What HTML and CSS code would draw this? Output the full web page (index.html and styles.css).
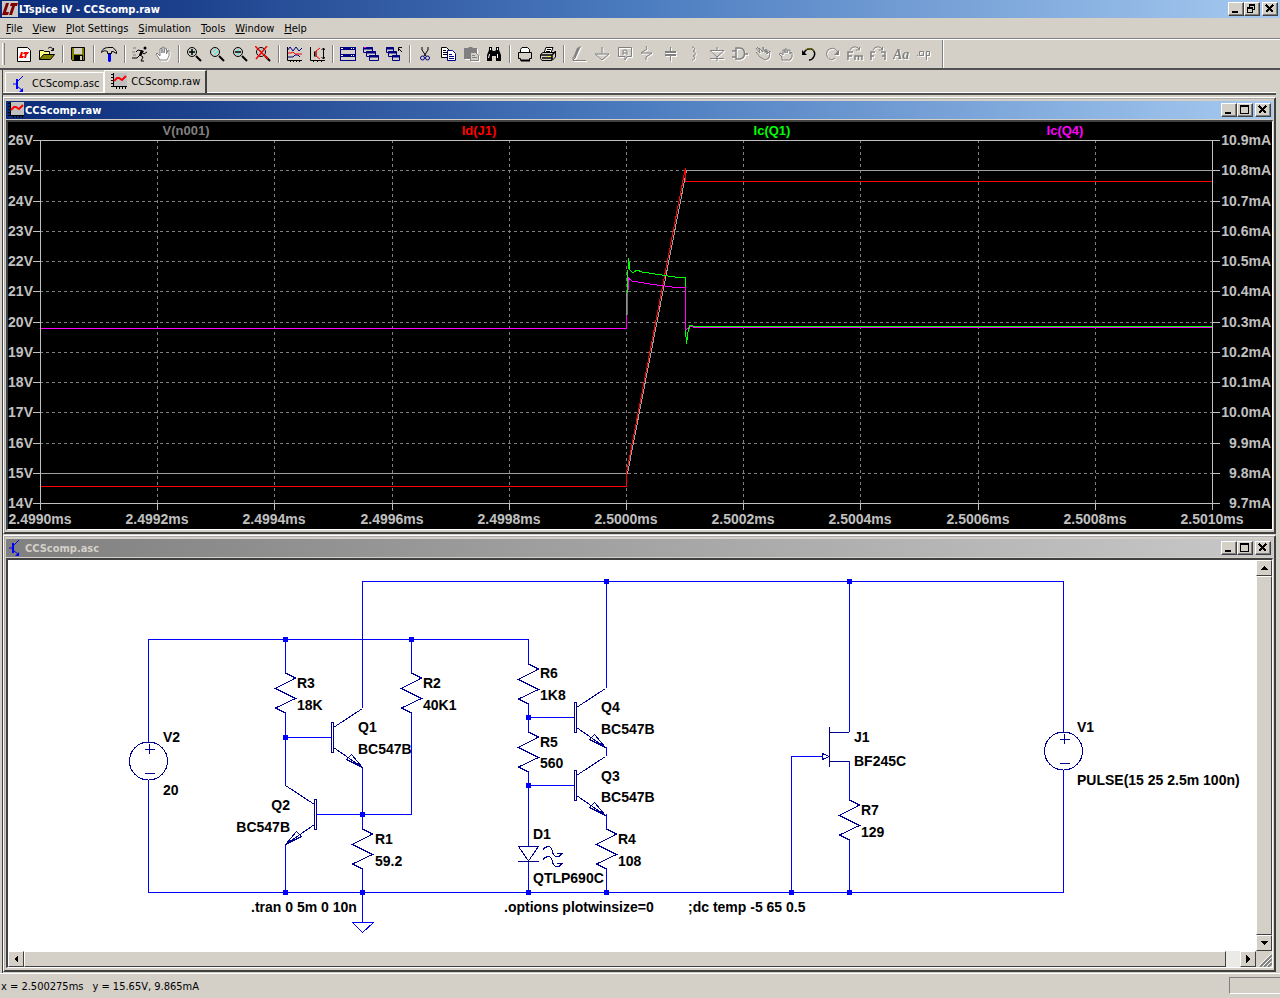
FILE: index.html
```html
<!DOCTYPE html>
<html lang="en">
<head>
  <meta charset="UTF-8">
  <meta name="viewport" content="width=device-width, initial-scale=1.0">
  <title>LTspice IV - CCScomp.raw</title>
  <link rel="stylesheet" href="styles.css">
</head>
<body>

  <!-- Shared symbols -->
  <svg class="defs" width="0" height="0" aria-hidden="true">
    <defs>
      <symbol id="icon-wave" viewBox="0 0 16 16">
        <rect x="2" width="14" height="13" fill="#c0c0c0"/>
        <path d="M2.5 0V14M0 13.5H16M0 1.5H2M0 4.5H2M0 7.5H2M0 10.5H2M5.5 14V16M8.5 14V16M11.5 14V16M14.5 14V16" stroke="#000"/>
        <path d="M3 8L6 5H8L11 7L15 3" stroke="#f00" stroke-width="2" fill="none"/>
      </symbol>
      <symbol id="icon-bjt" viewBox="0 0 16 16">
        <path d="M1 8H5M5 6L11 0M5 10L11 15" stroke="#00f" fill="none"/>
        <path d="M5 3V13" stroke="#00f" stroke-width="2"/>
        <path d="M11 12V16H7Z" fill="#00f"/>
      </symbol>
      <symbol id="icon-lens" viewBox="0 0 16 16">
        <circle cx="6" cy="6" r="4.5" fill="#d4d0c8" stroke="#000"/>
        <path d="M4 6L7 3M5 9L9 5" stroke="#0ff"/>
        <path d="M10 10L15 15" stroke="#000" stroke-width="2"/>
      </symbol>
      <symbol id="icon-min" viewBox="0 0 12 10"><path d="M2 8H8" stroke="#000" stroke-width="2"/></symbol>
      <symbol id="icon-max" viewBox="0 0 12 10"><path d="M1.5 1V8.5H9.5V1M1 1H10" stroke="#000" fill="none"/><path d="M1 1H10" stroke="#000" stroke-width="2"/></symbol>
      <symbol id="icon-restore" viewBox="0 0 12 10"><path d="M3.5 3V.5H8.5V5.5H7M3 1H9M1.5 3.5H6.5V8.5H1.5ZM1 4H7" stroke="#000" fill="none"/></symbol>
      <symbol id="icon-close" viewBox="0 0 12 10"><path d="M2 1L9 8M9 1L2 8" stroke="#000" stroke-width="1.5"/></symbol>
      <!-- circuit parts, origin at the first pin -->
      <g id="resistor"><path d="M0 0L10 5L-10 15.500L10 25.500L-10 35L0 40"/></g>
      <g id="npn">
        <path d="M0 -15H2V15H0ZM2 -10L31 -29M2 10L31 30M20 17L31 30L15 22Z"/>
      </g>
      <g id="source">
        <circle r="19"/>
        <path d="M-4 -12H6M1 -17V-7M-4 12H6"/>
      </g>
    </defs>
  </svg>

  <div class="app">
    <header class="title-bar">
      <svg class="icon" viewBox="0 0 16 16"><rect width="16" height="16" fill="#c8c8c8"/><path d="M4 2H7L4 11H7L6 14H0ZM9 2H16L15 5H13L10 14H7L10 5H8Z" fill="#800000"/></svg>
      <h1>LTspice IV - CCScomp.raw</h1>
      <div class="window-buttons">
        <button aria-label="Minimize"><svg><use href="#icon-min"/></svg></button>
        <button aria-label="Restore"><svg><use href="#icon-restore"/></svg></button>
        <button aria-label="Close"><svg><use href="#icon-close"/></svg></button>
      </div>
    </header>

    <nav class="menu-bar">
      <button><u>F</u>ile</button>
      <button><u>V</u>iew</button>
      <button><u>P</u>lot Settings</button>
      <button><u>S</u>imulation</button>
      <button><u>T</u>ools</button>
      <button><u>W</u>indow</button>
      <button><u>H</u>elp</button>
    </nav>

    <div class="toolbar">
      <span class="grip"></span>
      <button aria-label="New schematic"><svg viewBox="0 0 16 16"><path d="M1.500 1.500H11.500L14.500 4.500V15.500H1.500Z" fill="#fff" stroke="#000"/><path d="M5 6H7L6 10H8L7 12H3ZM8 6H13L12 8H11L10 12H8L9 8H7Z" fill="#f00"/></svg></button>
      <button aria-label="Open"><svg viewBox="0 0 16 16"><path d="M.5 13.500V4.500H4.500L5.500 5.500H10.500V8" fill="#ffff80" stroke="#000"/><path d="M.5 13.500L4.500 8.500H15.500L11.500 13.500Z" fill="#808000" stroke="#000"/><path d="M9 2.500C11 .5 13 1 14 4M14.500 2V4.500H12" fill="none" stroke="#000"/></svg></button>
      <span class="sep"></span>
      <button aria-label="Save"><svg viewBox="0 0 16 16"><path d="M1.500 1.500H14.500V14.500H2.500L1.500 13.500Z" fill="#808000" stroke="#000"/><rect x="4" y="2" width="8" height="6" fill="#d4d0c8"/><rect x="4" y="9" width="9" height="5" fill="#000"/><rect x="10" y="10" width="2" height="4" fill="#d4d0c8"/></svg></button>
      <span class="sep"></span>
      <button aria-label="Control panel"><svg viewBox="0 0 16 16"><path d="M.5 6.500C1 3 4 1.500 8 1.500H12L15.500 5.500V7.500L12 5.500H10.500V7.500H6.500V5.500C4 4 2 5 .5 6.500Z" fill="#d4d0c8" stroke="#000"/><path d="M7 8H10V15L9 16H8L7 15Z" fill="#00f"/></svg></button>
      <span class="sep"></span>
      <button aria-label="Run"><svg viewBox="0 0 16 16"><circle cx="13" cy="2" r="1.500"/><path d="M10 5L8 9L11 11L9 15H12M8 9L5 12H0M10 5L6 4L4 6M10 6L12 8L15 6" fill="none" stroke="#000"/><path d="M9 4L12 5L9 10L7 9Z"/><path d="M1 2H4M0 6H3M1 9H4" stroke="#808080"/></svg></button>
      <button class="off" disabled aria-label="Halt"><svg viewBox="0 0 16 16"><path d="M5 14L1 8L2 7L5 10V3L6 2L7 3V7V1.500L9 1V7L10 2L11.500 2.500V8L13 4L14 5V10L12 14Z" fill="#fff" stroke="#808080"/></svg></button>
      <span class="sep"></span>
      <button aria-label="Zoom area"><svg viewBox="0 0 16 16"><use href="#icon-lens"/><path d="M3 6H9M6 3V9" stroke="#000" stroke-width="1.500"/></svg></button>
      <button aria-label="Pan"><svg viewBox="0 0 16 16"><use href="#icon-lens"/></svg></button>
      <button aria-label="Zoom back"><svg viewBox="0 0 16 16"><use href="#icon-lens"/><path d="M3 6H9" stroke="#000" stroke-width="1.500"/></svg></button>
      <button aria-label="Zoom full extents"><svg viewBox="0 0 16 16"><use href="#icon-lens"/><path d="M0 0L13 13M12 0L1 13" stroke="#f00" stroke-width="1.500"/></svg></button>
      <span class="sep"></span>
      <button aria-label="Autorange"><svg viewBox="0 0 16 16"><path d="M1.500 1V14.500H16M4.500 14V16M7.500 14V16M10.500 14V16M13.500 14V16" fill="none" stroke="#000"/><path d="M1 5L4 1L7 5L10 1L13 5L16 2M2 11H7L9 9H12L14 11" fill="none" stroke="#000080"/><path d="M2 7H5L7 6L9 8H16" fill="none" stroke="#f00"/></svg></button>
      <button aria-label="Plot settings"><svg viewBox="0 0 16 16"><path d="M1.500 1V14.500H16M4.500 14V16M8.500 14V16M12.500 14V16M5 6H8M5 8H8M5 10H8M5.500 6V10M14.500 2V13M12.500 4L14.500 2L16 4M12.500 11L14.500 13L16 11" fill="none" stroke="#000"/><path d="M11 2L7 5V10L11 13" fill="none" stroke="#f00"/></svg></button>
      <span class="sep"></span>
      <button aria-label="Tile windows"><svg viewBox="0 0 16 16" shape-rendering="crispEdges"><path d="M0 1H16V15H0Z" fill="#000080"/><path d="M1 4H15V8H1ZM1 11H15V14H1Z" fill="#d4d0c8"/><path d="M1 2.500H3M11 2.500H12M13 2.500H14M1 9.500H3M11 9.500H12M13 9.500H14" stroke="#fff"/></svg></button>
      <button aria-label="Cascade windows"><svg viewBox="0 0 16 16"><g fill="#d4d0c8" stroke="#000080"><path d="M.5 1.500H9.500V6.500H.5Z"/><path d="M0 2.500H10" stroke-width="2"/><path d="M3.500 5.500H12.500V10.500H3.500Z"/><path d="M3 6.500H13" stroke-width="2"/><path d="M6.500 9.500H15.500V14.500H6.500Z"/><path d="M6 10.500H16" stroke-width="2"/></g><path d="M1 1.500H3" stroke="#f0f"/></svg></button>
      <button aria-label="Close all windows"><svg viewBox="0 0 16 16"><g fill="#d4d0c8" stroke="#000080"><path d="M.5 1.500H7.500V6.500H.5Z"/><path d="M0 2.500H8" stroke-width="2"/><path d="M2.500 5.500H10.500V10.500H2.500Z"/><path d="M2 6.500H11" stroke-width="2"/><path d="M6.500 9.500H13.500V14.500H6.500Z"/><path d="M6 10.500H14" stroke-width="2"/></g><path d="M16 6L12 2M12.500 5V1.500H16" fill="none" stroke="#000"/></svg></button>
      <span class="sep"></span>
      <button aria-label="Cut"><svg viewBox="0 0 16 16"><path d="M5 1V4L9 10M11 1V4L7 10" fill="none" stroke="#000"/><circle cx="5.500" cy="12" r="2" fill="none" stroke="#000080"/><circle cx="10.500" cy="12" r="2" fill="none" stroke="#000080"/></svg></button>
      <button aria-label="Copy"><svg viewBox="0 0 16 16"><path d="M1.500 1.500H6.500L9.500 4.500V11.500H1.500Z" fill="#fff" stroke="#000"/><path d="M3 4.500H6M3 6.500H7M3 8.500H7" stroke="#000"/><path d="M7.500 4.500H12.500L15.500 7.500V14.500H7.500Z" fill="#fff" stroke="#000080"/><path d="M9 8.500H12M9 10.500H14M9 12.500H14" stroke="#000080"/></svg></button>
      <button class="off" disabled aria-label="Paste"><svg viewBox="0 0 16 16"><path d="M1 2H5L6 1H9L10 2H14V13H1Z" fill="#808080"/><path d="M7.500 6.500H12.500L15.500 9.500V14.500H7.500Z" fill="#d4d0c8" stroke="#808080"/><path d="M9 9.500H12M9 11.500H14" stroke="#808080"/></svg></button>
      <button aria-label="Find"><svg viewBox="0 0 16 16"><path d="M3 1H6V4L7 5H9L10 4V1H13V4L15 9V15H10V10H6V15H1V9L3 4Z"/><path d="M4.500 2V4M11.500 2V4M3.500 8L2.500 12M11.500 8V12" stroke="#fff"/></svg></button>
      <span class="sep"></span>
      <button aria-label="Print setup"><svg viewBox="0 0 16 16"><path d="M3.500 7.500V3.500L5 1.500H10.500L12.500 3.500V7.500" fill="#fff" stroke="#000"/><path d="M1.500 6.500H14.500V12.500H12.500V14.500H3.500V12.500H1.500Z" fill="#d4d0c8" stroke="#000"/><path d="M4 14.500H13" stroke="#000" stroke-width="2"/></svg></button>
      <button aria-label="Print"><svg viewBox="0 0 16 16"><path d="M4 7L6 1.500H13L11 7" fill="#fff" stroke="#000"/><path d="M7 3.500H11M6 5.500H10" stroke="#000"/><path d="M.5 8.500L3 6.500H14L15.500 5V11L12 14.500H2L.5 12.500Z" fill="#d4d0c8" stroke="#000"/><path d="M1 9H12V14M12 9L15 6M2 12H12" fill="none" stroke="#000" stroke-width="1.500"/><path d="M8 10.500H11" stroke="#ff0"/></svg></button>
      <span class="sep"></span>
      <button class="off" disabled aria-label="Draw wire"><svg viewBox="0 0 16 16"><path d="M2 12L6 2L10 0L5 11Z" fill="#808080"/><path d="M2 14.500H15M2 11V14L5 11" fill="none" stroke="#808080"/></svg></button>
      <button class="off" disabled aria-label="Place ground"><svg viewBox="0 0 16 16"><path d="M8 1V8M1 8H15L8 14Z" fill="none" stroke="#808080"/></svg></button>
      <button class="off" disabled aria-label="Label net"><svg viewBox="0 0 16 16"><path d="M1.500 1.500H14.500V10.500H10L8 14V10.500H1.500ZM6 9V5L7 4H9L10 5V9M6 7H10" fill="none" stroke="#808080"/></svg></button>
      <button class="off" disabled aria-label="Resistor"><svg viewBox="0 0 16 16"><path d="M6 0L7 3L1 7H12L6 11V14" fill="none" stroke="#808080"/></svg></button>
      <button class="off" disabled aria-label="Capacitor"><svg viewBox="0 0 16 16"><path d="M2 6H13M2 9H13" stroke="#808080" stroke-width="2"/><path d="M7.500 1V6M7.500 10V15" stroke="#808080"/></svg></button>
      <button class="off" disabled aria-label="Inductor"><svg viewBox="0 0 16 16"><path d="M6 1C9 1 10 5 7 5C10 5 10 10 7 10C10 10 9 14 6 14" fill="none" stroke="#808080"/></svg></button>
      <button class="off" disabled aria-label="Diode"><svg viewBox="0 0 16 16"><path d="M8 1V4M1 4.500H15L8 11ZM1 12.500H15M8 11V15" fill="none" stroke="#808080"/></svg></button>
      <button class="off" disabled aria-label="Component"><svg viewBox="0 0 16 16"><path d="M0 5H4M0 11H4M4 2H8C14 3 14 12 8 13H4ZM12 8H16" fill="none" stroke="#808080" stroke-width="1.500"/></svg></button>
      <button class="off" disabled aria-label="Move"><svg viewBox="0 0 16 16"><path d="M1 2L5 7L4 2L8 6L8 1L10 6M1 6L5 11L10 14L14 12L15 5L12 8L11 3L10 7M2 1L4 3M13 4L12 8" fill="none" stroke="#808080"/></svg></button>
      <button class="off" disabled aria-label="Drag"><svg viewBox="0 0 16 16"><path d="M4 14V11L1 8L3 7L5 9V4H7V7V3H9V7L10 4H12V8L13 6L14 7V11L12 14Z" fill="none" stroke="#808080"/></svg></button>
      <button aria-label="Undo"><svg viewBox="0 0 16 16"><path d="M3 8C4 2 10 2 12 4C16 8 12 14 8 14" fill="none" stroke="#000" stroke-width="1.500"/><path d="M5 4C8 1 12 3 13 5" fill="none" stroke="#808000"/><path d="M1 4V9H6Z"/></svg></button>
      <button class="off" disabled aria-label="Redo"><svg viewBox="0 0 16 16"><path d="M14 7C13 2 7 1 4 4C1 8 3 13 8 14L11 12" fill="none" stroke="#808080"/><path d="M15 4V9H10Z" fill="#808080"/></svg></button>
      <button class="off" disabled aria-label="Rotate"><svg viewBox="0 0 16 16"><path d="M1 14V6H6M1 10H5M8 14V10H15V14M11.500 10V14" fill="none" stroke="#808080" stroke-width="1.500"/><path d="M3 4C5 0 10 0 12 3M12.500 1V4H9" fill="none" stroke="#808080"/></svg></button>
      <button class="off" disabled aria-label="Mirror"><svg viewBox="0 0 16 16"><path d="M1 14V6H5M1 10H4M15 14V6H11M15 10H12" fill="none" stroke="#808080" stroke-width="1.500"/><path d="M3 4C5 0 10 0 12 3M12.500 1V4H9" fill="none" stroke="#808080"/></svg></button>
      <button class="off" disabled aria-label="Text"><svg viewBox="0 0 16 16"><text class="icon-serif" x="0" y="13">Aa</text></svg></button>
      <button class="off" disabled aria-label="SPICE directive"><svg viewBox="0 0 16 16"><path d="M3.500 5.500H7.500V9.500H3.500ZM10.500 14V5.500H13.500V9.500H10.500M1 9.500H2" fill="none" stroke="#808080"/></svg></button>
      <span class="toolbar-end"></span>
    </div>

    <div class="tabs">
      <button class="tab"><svg class="icon"><use href="#icon-bjt"/></svg>CCScomp.asc</button>
      <button class="tab active"><svg class="icon"><use href="#icon-wave"/></svg>CCScomp.raw</button>
    </div>

    <main class="workspace">
      <section class="window">
        <div class="window-title">
          <svg class="icon"><use href="#icon-wave"/></svg>
          <h2>CCScomp.raw</h2>
          <div class="window-buttons">
            <button aria-label="Minimize"><svg><use href="#icon-min"/></svg></button>
            <button aria-label="Maximize"><svg><use href="#icon-max"/></svg></button>
            <button aria-label="Close"><svg><use href="#icon-close"/></svg></button>
          </div>
        </div>
        <div class="client">
          <svg class="plot" viewBox="8 122 1264 407">
            <g class="grid">
              <path d="M40 170.500H1212M40 201.500H1212M40 231.500H1212M40 261.500H1212M40 291.500H1212M40 322.500H1212M40 352.500H1212M40 382.500H1212M40 412.500H1212M40 443.500H1212M40 473.500H1212"/>
              <path d="M157.500 140V503M274.500 140V503M392.500 140V503M509.500 140V503M626.500 140V503M743.500 140V503M860.500 140V503M978.500 140V503M1095.500 140V503"/>
            </g>
            <g class="axis">
              <path d="M33 140.500H1220M33 503.500H1220M40.500 140V510M1212.500 140V510"/>
              <path d="M33 170.500H40M33 201.500H40M33 231.500H40M33 261.500H40M33 291.500H40M33 322.500H40M33 352.500H40M33 382.500H40M33 412.500H40M33 443.500H40M33 473.500H40"/>
              <path d="M1212 170.500H1220M1212 201.500H1220M1212 231.500H1220M1212 261.500H1220M1212 291.500H1220M1212 322.500H1220M1212 352.500H1220M1212 382.500H1220M1212 412.500H1220M1212 443.500H1220M1212 473.500H1220"/>
              <path d="M157.500 503V510M274.500 503V510M392.500 503V510M509.500 503V510M626.500 503V510M743.500 503V510M860.500 503V510M978.500 503V510M1095.500 503V510"/>
            </g>

            <path class="trace gray" d="M41 473.500H627.500L686.500 170.500H1212"/>
            <path class="trace red" d="M41 486.500H626.500V473L685 170V168L685.500 181.500H1212"/>
            <path class="trace magenta" d="M41 328.500H626.500L628.500 278L632 281L650 284L672 287H685.500V330L688 328L690 326L694 327.500H1212"/>
            <path class="trace green" d="M626.500 315V305L628.500 258L630 270L633 273L637 270L642 272L675 277H685.500V287M685.500 330L686.500 344L688 332L690 325L694 326.500H1212"/>

            <g class="legend">
              <text class="gray" x="186" y="135">V(n001)</text>
              <text class="red" x="479" y="135">Id(J1)</text>
              <text class="green" x="772" y="135">Ic(Q1)</text>
              <text class="magenta" x="1065" y="135">Ic(Q4)</text>
            </g>
            <g class="labels left">
              <text x="33" y="145">26V</text><text x="33" y="175">25V</text><text x="33" y="206">24V</text>
              <text x="33" y="236">23V</text><text x="33" y="266">22V</text><text x="33" y="296">21V</text>
              <text x="33" y="327">20V</text><text x="33" y="357">19V</text><text x="33" y="387">18V</text>
              <text x="33" y="417">17V</text><text x="33" y="448">16V</text><text x="33" y="478">15V</text>
              <text x="33" y="508">14V</text>
            </g>
            <g class="labels right">
              <text x="1271" y="145">10.9mA</text><text x="1271" y="175">10.8mA</text><text x="1271" y="206">10.7mA</text>
              <text x="1271" y="236">10.6mA</text><text x="1271" y="266">10.5mA</text><text x="1271" y="296">10.4mA</text>
              <text x="1271" y="327">10.3mA</text><text x="1271" y="357">10.2mA</text><text x="1271" y="387">10.1mA</text>
              <text x="1271" y="417">10.0mA</text><text x="1271" y="448">9.9mA</text><text x="1271" y="478">9.8mA</text>
              <text x="1271" y="508">9.7mA</text>
            </g>
            <g class="labels bottom">
              <text x="40" y="524">2.4990ms</text><text x="157" y="524">2.4992ms</text><text x="274" y="524">2.4994ms</text>
              <text x="392" y="524">2.4996ms</text><text x="509" y="524">2.4998ms</text><text x="626" y="524">2.5000ms</text>
              <text x="743" y="524">2.5002ms</text><text x="860" y="524">2.5004ms</text><text x="978" y="524">2.5006ms</text>
              <text x="1095" y="524">2.5008ms</text><text x="1212" y="524">2.5010ms</text>
            </g>
          </svg>
        </div>
      </section>

      <section class="window inactive">
        <div class="window-title">
          <svg class="icon"><use href="#icon-bjt"/></svg>
          <h2>CCScomp.asc</h2>
          <div class="window-buttons">
            <button aria-label="Minimize"><svg><use href="#icon-min"/></svg></button>
            <button aria-label="Maximize"><svg><use href="#icon-max"/></svg></button>
            <button aria-label="Close"><svg><use href="#icon-close"/></svg></button>
          </div>
        </div>
        <div class="client scrollable">
          <svg class="schematic" viewBox="8 560 1248 391">
            <g class="wires">
              <path d="M362.500 708V581.500H1063.500V732M1063.500 770V892.500H148.500V780M148.500 742V639.500H528.500V664"/>
              <path d="M285.500 639V673M285.500 713V785M285.500 737.500H331M285.500 844V892M411.500 639V673M411.500 713V814.500H317"/>
              <path d="M362.500 767V829M362.500 869V922M528.500 704V732M528.500 772V846M528.500 861V892M528.500 717.500H575M528.500 785.500H575"/>
              <path d="M606.500 581V688M606.500 747V756M606.500 814V829M606.500 869V892M849.500 581V732M849.500 761V800M849.500 840V892M791.500 892V756.500H822"/>
              <path d="M352.500 922.500H373.500L362.500 932.500Z"/>
            </g>
            <g class="parts">
              <use href="#resistor" x="285.500" y="673"/>
              <use href="#resistor" x="411.500" y="673"/>
              <use href="#resistor" x="362.500" y="829"/>
              <use href="#resistor" x="528.500" y="664"/>
              <use href="#resistor" x="528.500" y="732"/>
              <use href="#resistor" x="606.500" y="829"/>
              <use href="#resistor" x="849.500" y="800"/>
              <use href="#npn" x="331.500" y="737.500"/>
              <use href="#npn" x="574.500" y="717.500"/>
              <use href="#npn" x="574.500" y="785.500"/>
              <use href="#npn" transform="translate(316.500 814.500) scale(-1 1)"/>
              <use href="#source" x="148.500" y="761"/>
              <use href="#source" x="1063.500" y="751"/>
              <!-- LED -->
              <path d="M518.500 846.500H538.500L528.500 861ZM518 861.500H539"/>
              <path d="M543 850C545 846 551 845 552 850C553 855 555 858 559 856L562 854M557 853.500H562.500L559 857M543 860C545 856 551 855 552 860C553 865 555 868 559 866L562 864M557 863.500H562.500L559 867"/>
              <!-- JFET -->
              <path d="M829.500 727V767M829 732.500H849M829 761.500H849M822.500 753.500L829 756.500L822.500 759.500Z"/>
            </g>
            <path class="nodes" d="M283 637h5v5h-5zM409 637h5v5h-5zM283 735h5v5h-5zM360 812h5v5h-5zM283 890h5v5h-5zM360 890h5v5h-5zM526 715h5v5h-5zM526 783h5v5h-5zM526 890h5v5h-5zM604 579h5v5h-5zM604 890h5v5h-5zM847 579h5v5h-5zM789 890h5v5h-5zM847 890h5v5h-5z"/>
            <g class="names">
              <text x="163" y="742">V2</text><text x="163" y="795">20</text>
              <text x="297" y="688">R3</text><text x="297" y="710">18K</text>
              <text x="423" y="688">R2</text><text x="423" y="710">40K1</text>
              <text x="358" y="732">Q1</text><text x="358" y="754">BC547B</text>
              <text class="end" x="290" y="810">Q2</text><text class="end" x="290" y="832">BC547B</text>
              <text x="375" y="844">R1</text><text x="375" y="866">59.2</text>
              <text x="540" y="678">R6</text><text x="540" y="700">1K8</text>
              <text x="540" y="747">R5</text><text x="540" y="768">560</text>
              <text x="601" y="712">Q4</text><text x="601" y="734">BC547B</text>
              <text x="601" y="781">Q3</text><text x="601" y="802">BC547B</text>
              <text x="533" y="839">D1</text><text x="533" y="883">QTLP690C</text>
              <text x="618" y="844">R4</text><text x="618" y="866">108</text>
              <text x="854" y="742">J1</text><text x="854" y="766">BF245C</text>
              <text x="861" y="815">R7</text><text x="861" y="837">129</text>
              <text x="1077" y="732">V1</text><text x="1077" y="785">PULSE(15 25 2.5m 100n)</text>
              <text x="251" y="912">.tran 0 5m 0 10n</text>
              <text x="504" y="912">.options plotwinsize=0</text>
              <text x="688" y="912">;dc temp -5 65 0.5</text>
            </g>
          </svg>
          <div class="scrollbar vertical">
            <button aria-label="Scroll up"><svg viewBox="0 0 8 8"><path d="M4 2L8 6H0Z"/></svg></button>
            <span class="thumb"></span>
            <button aria-label="Scroll down"><svg viewBox="0 0 8 8"><path d="M0 2H8L4 6Z"/></svg></button>
          </div>
          <div class="scrollbar horizontal">
            <button aria-label="Scroll left"><svg viewBox="0 0 8 8"><path d="M6 0V8L2 4Z"/></svg></button>
            <span class="thumb"></span>
            <span class="track"></span>
            <button aria-label="Scroll right"><svg viewBox="0 0 8 8"><path d="M2 0V8L6 4Z"/></svg></button>
          </div>
          <svg class="size-grip" viewBox="0 0 16 16"><path d="M4 16L16 4M8 16L16 8M12 16L16 12" stroke="#808080" stroke-width="2"/><path d="M3 15L15 3M7 15L15 7M11 15L15 11" stroke="#fff"/></svg>
        </div>
      </section>
    </main>

    <footer class="status-bar">
      <span>x = 2.500275ms</span>
      <span>y = 15.65V, 9.865mA</span>
      <span class="status-pane"></span>
    </footer>
  </div>

</body>
</html>
```
FILE: styles.css
```css
* {
  box-sizing: border-box;
}
body {
  margin: 0;
  background-color: #d4d0c8;
  font-family: 'DejaVu Sans Condensed', 'DejaVu Sans', sans-serif;
  font-stretch: condensed;
  font-size: 11px;
  color: #000;
}
button {
  margin: 0;
  padding: 0;
  border: none;
  background: none;
  font: inherit;
  color: inherit;
}
h1, h2 {
  margin: 0;
  font-size: 11px;
  font-weight: bold;
  color: #fff;
}
svg {
  display: block;
}
.defs {
  position: absolute;
}
.icon {
  width: 16px;
  height: 16px;
  flex: none;
}
.app {
  display: flex;
  flex-direction: column;
  min-height: 100vh;
}

/* Title bars */
.title-bar, .window-title {
  display: flex;
  align-items: center;
  height: 18px;
  padding: 0 2px;
  gap: 1px;
  background: linear-gradient(to right, #0a2a78, #4c7cc0 50%, #a6caf0);
}
.inactive .window-title {
  background: linear-gradient(to right, #808080, #c8c8c8);
}
.inactive h2 {
  color: #d4d0c8;
}
.window-buttons {
  display: flex;
  margin-left: auto;
}
.window-buttons button {
  width: 16px;
  height: 14px;
  padding: 1px;
  background-color: #d4d0c8;
  border: 1px solid;
  border-color: #fff #404040 #404040 #fff;
  box-shadow: inset -1px -1px 0 #808080;
}
.window-buttons button:last-child {
  margin-left: 2px;
}
.window-buttons svg {
  width: 12px;
  height: 10px;
  shape-rendering: crispEdges;
}

/* Menu */
.menu-bar {
  display: flex;
  align-items: center;
  gap: 10px;
  height: 21px;
  padding: 0 6px;
  border-bottom: 1px solid #808080;
}

/* Toolbar */
.toolbar {
  display: flex;
  align-items: center;
  height: 31px;
  border-top: 1px solid #fff;
  border-bottom: 2px solid #505050;
}
.toolbar button {
  width: 23px;
  height: 24px;
  padding: 3px;
}
.toolbar button svg {
  width: 16px;
  height: 16px;
}
.off svg {
  filter: drop-shadow(1px 1px 0 #fff);
}
.grip {
  width: 3px;
  height: 22px;
  margin: 0 8px 0 2px;
  border-left: 1px solid #fff;
  border-right: 1px solid #808080;
}
.sep {
  width: 2px;
  height: 18px;
  margin: 0 3px;
  background-color: #fff;
  border-left: 1px solid #808080;
}
.toolbar-end {
  align-self: stretch;
  width: 2px;
  margin-left: 6px;
  background-color: #fff;
  border-left: 1px solid #808080;
}
.icon-serif {
  font: italic bold 14px 'Liberation Serif', serif;
  fill: #808080;
}

/* Tabs */
.tabs {
  display: flex;
  align-items: flex-end;
  height: 25px;
  margin: 0 4px 0 2px;
  padding-left: 2px;
  border-left: 1px solid #404040;
  border-bottom: 2px solid #505050;
  box-shadow: inset 0 -1px 0 #fff;
}
.tab {
  display: flex;
  align-items: center;
  gap: 4px;
  height: 21px;
  padding: 2px 4px 0 6px;
  border: 1px solid #fff;
}
.tab.active {
  height: 23px;
  padding: 0 5px 2px 6px;
  background-color: #d4d0c8;
  border-right: 2px solid #404040;
  border-bottom: none;
}

/* Document windows */
.workspace {
  margin: 0 3px 0 2px;
  padding: 2px 1px 0 0;
  border-left: 1px solid #404040;
}
.window {
  margin-bottom: 1px;
  padding: 2px 1px;
  border: 2px solid #404040;
  border-top: 2px ridge #fff;
  border-left: 2px ridge #fff;
}
.client {
  margin-top: 1px;
  border: 1px solid #fff;
  border-top: 2px solid #404040;
  border-left: 2px solid #404040;
}
.plot, .schematic {
  width: 100%;
  height: auto;
  shape-rendering: crispEdges;
  font-family: 'Liberation Sans', Arial, sans-serif;
  font-size: 14px;
  font-weight: bold;
}

/* Waveform plot */
.plot {
  background-color: #000;
}
.grid {
  fill: none;
  stroke: #808080;
  stroke-dasharray: 3 3;
}
.axis {
  fill: none;
  stroke: #c0c0c0;
}
.trace {
  fill: none;
}
.trace.gray { stroke: #a0a0a0; }
.trace.red { stroke: #f00; }
.trace.green { stroke: #0f0; }
.trace.magenta { stroke: #f0f; }
.legend {
  font-size: 13px;
  text-anchor: middle;
}
.legend .gray { fill: #808080; }
.legend .red { fill: #f00; }
.legend .green { fill: #0f0; }
.legend .magenta { fill: #f0f; }
.labels {
  fill: #c0c0c0;
}
.left, .right, .end {
  text-anchor: end;
}
.bottom {
  text-anchor: middle;
}

/* Schematic */
.schematic {
  background-color: #fff;
}
.wires {
  fill: none;
  stroke: #00f;
}
.parts {
  fill: none;
  stroke: #000090;
}
.nodes {
  fill: #00f;
}

/* Scrollbars */
.scrollable {
  display: grid;
  grid-template-columns: 1fr 16px;
  grid-template-rows: auto 16px;
}
.scrollbar {
  display: flex;
}
.vertical {
  flex-direction: column;
}
.scrollbar button, .thumb {
  background-color: #d4d0c8;
  border: 1px solid;
  border-color: #fff #404040 #404040 #fff;
}
.scrollbar button {
  display: flex;
  align-items: center;
  justify-content: center;
  width: 16px;
  height: 16px;
  flex: none;
}
.scrollbar svg {
  width: 8px;
  height: 8px;
  shape-rendering: crispEdges;
}
.thumb {
  flex: 1;
}
.track {
  width: 14px;
  background-color: #eceae6;
}

/* Status bar */
.status-bar {
  display: flex;
  align-items: center;
  gap: 9px;
  flex: 1;
  min-height: 24px;
  padding-left: 1px;
  border-top: 1px solid #fff;
}
.status-pane {
  align-self: stretch;
  width: 51px;
  margin: 3px 0 4px auto;
  border: 1px solid #808080;
  border-right: none;
  border-bottom-color: #fff;
}
```
